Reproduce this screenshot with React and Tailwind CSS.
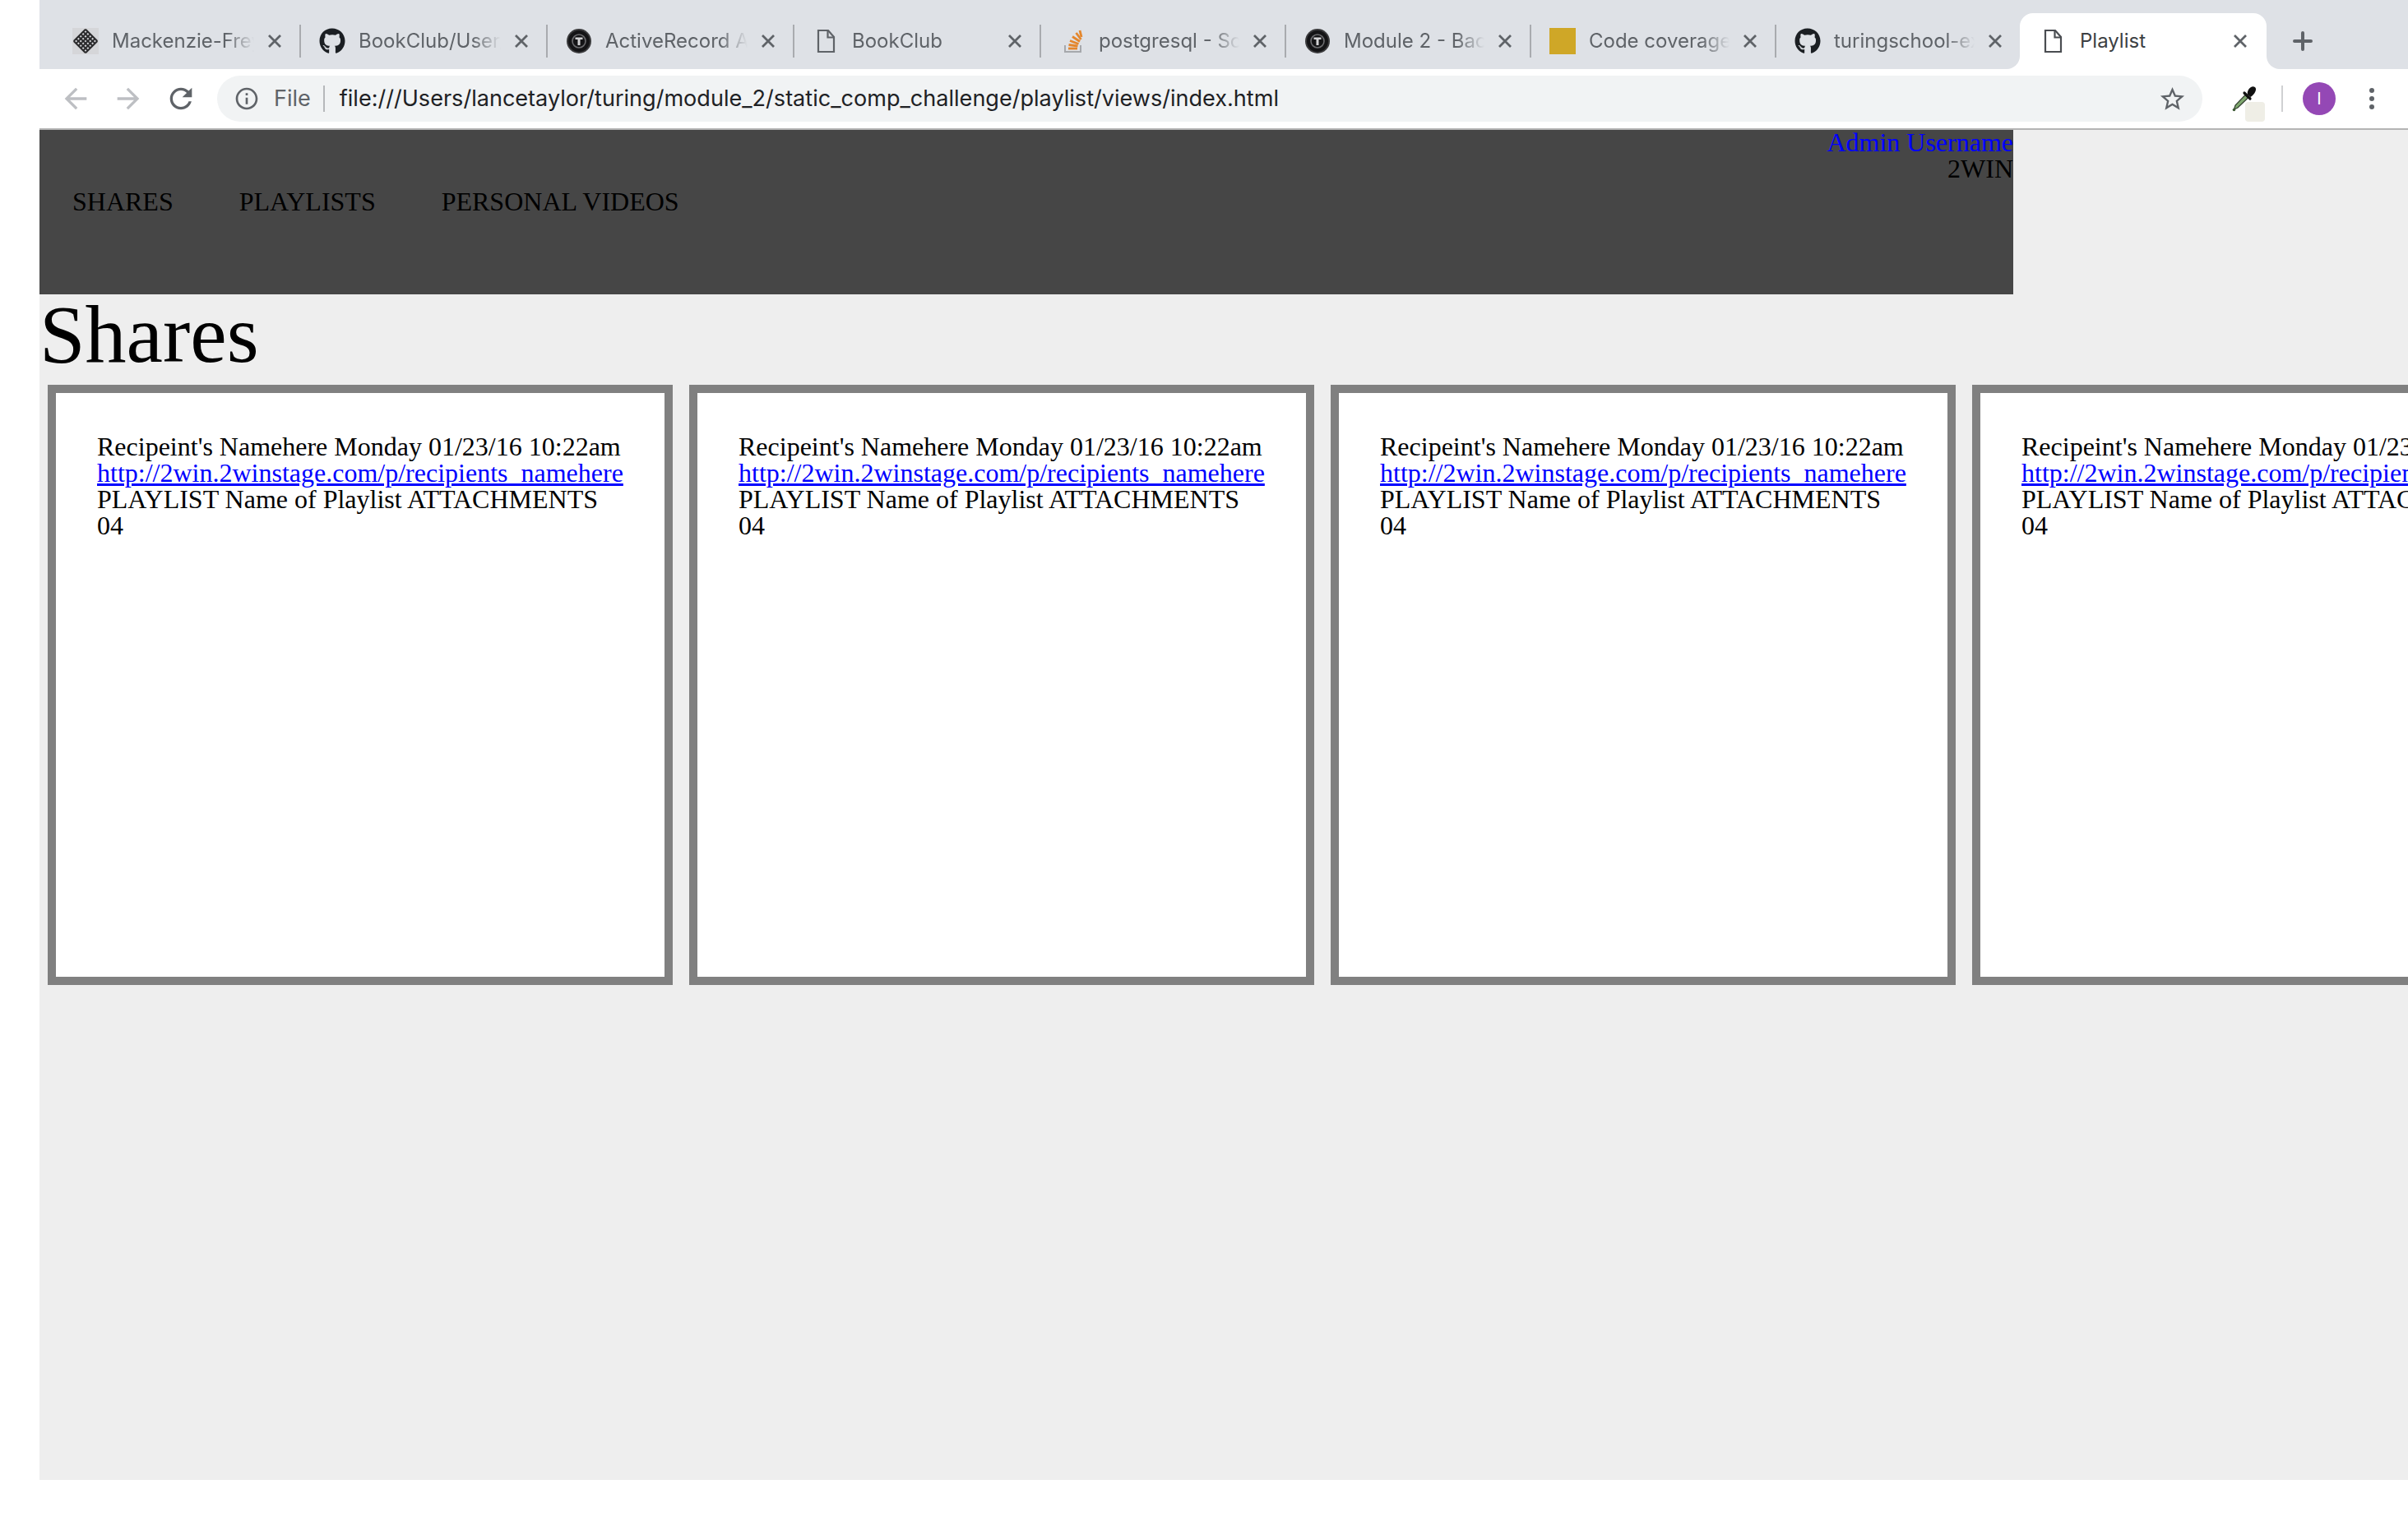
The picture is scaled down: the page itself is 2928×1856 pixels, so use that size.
import React from "react";
import { FaGithub } from "react-icons/fa";

const UI = "font-['Inter','Roboto',sans-serif]";

function DiamondIcon() {
  const lines = [];
  for (let i = 0; i <= 5; i++) {
    const p = 5 + i * 4.4;
    lines.push(<line key={"a" + i} x1={p} y1="5" x2={p} y2="27" />);
    lines.push(<line key={"b" + i} x1="5" y1={p} x2="27" y2={p} />);
  }
  return (
    <svg width="32" height="32" viewBox="0 0 32 32" className="bg-[#d5d6d9]">
      <g transform="rotate(45 16 16) translate(16 16) scale(0.92) translate(-16 -16)" stroke="#2b2b2d" strokeWidth="2.2" fill="none">
        {lines}
      </g>
    </svg>
  );
}

function TuringIcon() {
  return (
    <svg width="32" height="32" viewBox="0 0 32 32">
      <circle cx="16" cy="16" r="15" fill="#3a3a3c" />
      <circle cx="16" cy="16" r="13" fill="#141416" />
      <circle cx="16" cy="16" r="8" fill="none" stroke="#6d6d70" strokeWidth="1.6" />
      <path d="M11.5 11.5h9v2.6h-3v7h-3v-7h-3z" fill="#d2d2d4" />
    </svg>
  );
}

function DocIcon({ color = "#5f6368" }) {
  return (
    <svg width="32" height="32" viewBox="0 0 32 32" fill="none" stroke={color} strokeWidth="2.2">
      <path d="M7 3h12l7 8v18H7z" />
      <path d="M18.500 3v8.500h7.500" />
    </svg>
  );
}

function StackIcon() {
  return (
    <svg width="32" height="32" viewBox="0 0 32 32" fill="none">
      <path d="M7 21v8h19v-8" stroke="#a6a8ac" strokeWidth="2" />
      <g stroke="#e4862c" strokeWidth="2.800">
        <path d="M11 25h11" />
        <path d="M11.500 20.500l11 1.500" />
        <path d="M13 15.500l10.500 4" />
        <path d="M16 10.500l9 6" />
        <path d="M20.500 6l6 8" />
        <path d="M25 3l2 8" />
      </g>
    </svg>
  );
}

function Close() {
  return (
    <svg width="20" height="20" viewBox="0 0 20 20" stroke="#5f6368" strokeWidth="2.800" className="shrink-0">
      <path d="M3 3l14 14M17 3L3 17" />
    </svg>
  );
}

const tabs = [
  { title: "Mackenzie-Frey/brownfield", icon: <DiamondIcon />, wide: true },
  { title: "BookClub/User_stories", icon: <FaGithub className="w-8 h-8 text-[#1b1f23]" />, wide: true },
  { title: "ActiveRecord Associations", icon: <TuringIcon />, wide: true },
  { title: "BookClub", icon: <DocIcon />, wide: true },
  { title: "postgresql - Scaling", icon: <StackIcon /> },
  { title: "Module 2 - Backend", icon: <TuringIcon /> },
  { title: "Code coverage report", icon: <div className="w-8 h-8 bg-[#cfa727]" /> },
  { title: "turingschool-examples", icon: <FaGithub className="w-8 h-8 text-[#1b1f23]" />, noSep: true },
];

function Tab({ title, icon, noSep, wide }) {
  return (
    <div className={`${wide ? "w-[300px]" : "w-[298px]"} h-[68px] shrink-0 flex items-center pl-[22px]`}>
      <div className="w-8 h-8 shrink-0">{icon}</div>
      <div className="flex-1 min-w-0 ml-[16px] whitespace-nowrap overflow-hidden text-[24px] text-[#5f6368] [mask-image:linear-gradient(to_right,black_80%,transparent_100%)]">
        {title}
      </div>
      <div className="ml-[15px]"><Close /></div>
      <div className={`ml-[20px] w-[2px] h-[40px] shrink-0 ${noSep ? "bg-transparent" : "bg-[#a9abaf]"}`} />
    </div>
  );
}

function TabStrip() {
  return (
    <div className={`h-[84px] bg-[#dee1e6] flex items-end pl-[18px] ${UI}`}>
      {tabs.map((t) => (
        <Tab key={t.title} {...t} />
      ))}
      <div className="relative w-[300px] h-[68px] -ml-[2px] shrink-0 bg-white rounded-t-[16px] flex items-center pl-[24px]">
        <div className="absolute -left-4 bottom-0 w-4 h-4 bg-white">
          <div className="w-full h-full bg-[#dee1e6] rounded-br-[16px]" />
        </div>
        <div className="absolute -right-4 bottom-0 w-4 h-4 bg-white">
          <div className="w-full h-full bg-[#dee1e6] rounded-bl-[16px]" />
        </div>
        <div className="w-8 h-8 shrink-0"><DocIcon color="#4a4d51" /></div>
        <div className="w-[173px] ml-[17px] whitespace-nowrap overflow-hidden text-[24px] text-[#3c4043]">Playlist</div>
        <div className="ml-[12px]"><Close /></div>
      </div>
      <div className="h-[68px] flex items-center ml-[32px]">
        <svg width="24" height="24" viewBox="0 0 24 24" stroke="#5f6368" strokeWidth="4" strokeLinecap="round">
          <path d="M12 2v20M2 12h20" />
        </svg>
      </div>
    </div>
  );
}

function Toolbar() {
  return (
    <div className={`h-[72px] flex items-center pl-[24px] bg-white ${UI}`}>
      <svg width="40" height="40" viewBox="0 0 24 24" fill="#bdbfc3" className="shrink-0">
        <path d="M20 11H7.830l5.590-5.590L12 4l-8 8 8 8 1.410-1.410L7.830 13H20v-2z" />
      </svg>
      <svg width="40" height="40" viewBox="0 0 24 24" fill="#bdbfc3" className="shrink-0 ml-[24px]">
        <path d="M12 4l-1.410 1.410L16.170 11H4v2h12.170l-5.580 5.590L12 20l8-8z" />
      </svg>
      <svg width="40" height="40" viewBox="0 0 24 24" fill="#5f6368" className="shrink-0 ml-[24px]">
        <path d="M17.650 6.350C16.200 4.900 14.210 4 12 4c-4.420 0-7.990 3.580-7.990 8s3.570 8 7.990 8c3.730 0 6.840-2.550 7.730-6h-2.080c-.820 2.330-3.040 4-5.650 4-3.310 0-6-2.690-6-6s2.690-6 6-6c1.660 0 3.140.690 4.220 1.780L13 11h7V4l-2.350 2.350z" />
      </svg>
      <div className="w-[2414px] h-[56px] ml-[24px] shrink-0 rounded-full bg-[#f1f3f4] flex items-center pl-[20px]">
        <svg width="32" height="32" viewBox="0 0 24 24" fill="#5f6368" className="shrink-0">
          <path d="M11 17h2v-6h-2v6zm1-15C6.480 2 2 6.480 2 12s4.480 10 10 10 10-4.480 10-10S17.520 2 12 2zm0 18c-4.410 0-8-3.590-8-8s3.590-8 8-8 8 3.590 8 8-3.590 8-8 8zM11 9h2V7h-2v2z" />
        </svg>
        <span className="ml-[17px] text-[27px] text-[#5f6368]">File</span>
        <div className="ml-[15px] w-[2px] h-[32px] bg-[#b6b8bb] shrink-0" />
        <span className="ml-[18px] pt-px text-[27.07px] text-[#202124] whitespace-nowrap">
          file:///Users/lancetaylor/turing/module_2/static_comp_challenge/playlist/views/index.html
        </span>
        <svg width="35" height="35" viewBox="0 0 24 24" fill="#5f6368" className="shrink-0 ml-auto mr-[19px]">
          <path d="M22 9.240l-7.190-.620L12 2 9.190 8.630 2 9.240l5.460 4.730L5.820 21 12 17.270 18.180 21l-1.630-7.030L22 9.240zM12 15.400l-3.760 2.270 1-4.280-3.320-2.880 4.380-.380L12 6.100l1.710 4.040 4.380.380-3.320 2.880 1 4.280L12 15.400z" />
        </svg>
      </div>
      <div className="relative w-[40px] h-[44px] ml-[36px] mt-[12px] shrink-0">
        <svg width="30" height="32" viewBox="0 0 30 32" className="absolute left-0 top-0">
          <path d="M2.500 29L4 24 16 11.500l3.500 3.500L7 27z" fill="#7fa86f" stroke="#2f3b2c" strokeWidth="1.200" />
          <circle cx="2.500" cy="29.500" r="1.800" fill="#3c5a34" />
          <path d="M15 9l7 7" stroke="#111" strokeWidth="3.200" strokeLinecap="round" />
          <path d="M19 11l3.500 3c3-1.500 7-6.500 6.500-10-.3-2.500-3.500-3.500-6-2-2.500 1.500-5 5.500-4 9z" fill="#111" />
        </svg>
        <div className="absolute right-0 bottom-0 w-6 h-6 rounded bg-[#efeee6]" />
      </div>
      <div className="ml-[20px] w-[2px] h-[32px] bg-[#d0d1d3] shrink-0" />
      <div className="ml-[24px] w-10 h-10 rounded-full bg-[#9448b5] flex items-center justify-center text-white text-[20px] shrink-0">
        I
      </div>
      <div className="ml-[41px] flex flex-col gap-1 shrink-0">
        <div className="w-[6px] h-[6px] rounded-full bg-[#5f6368]" />
        <div className="w-[6px] h-[6px] rounded-full bg-[#5f6368]" />
        <div className="w-[6px] h-[6px] rounded-full bg-[#5f6368]" />
      </div>
    </div>
  );
}

function Card() {
  return (
    <div className="w-[760px] h-[730px] shrink-0 m-[10px] border-[10px] border-[#808080] bg-white px-[50px] pt-[49px] pb-[50px]">
      Recipeint's Namehere Monday 01/23/16 10:22am{" "}
      <a href="#" className="text-[#0000ff] underline">http://2win.2winstage.com/p/recipients_namehere</a>{" "}
      PLAYLIST Name of Playlist ATTACHMENTS 04
    </div>
  );
}

function Page() {
  return (
    <div className="h-[1642px] bg-[#eeeeee] overflow-hidden font-['Liberation_Serif',serif] text-[32px] leading-[32px] text-black">
      <header className="w-[2400px] h-[200px] bg-[#464646] flex justify-between">
        <nav className="flex gap-[80px] pl-[40px] pt-[71px]">
          <span>SHARES</span>
          <span>PLAYLISTS</span>
          <span>PERSONAL VIDEOS</span>
        </nav>
        <div className="text-right -mt-px">
          <a href="#" className="block text-[#0000ff]">Admin Username</a>
          <div>2WIN</div>
        </div>
      </header>
      <h1 className="h-[100px] text-[100px] leading-[98px] font-normal">Shares</h1>
      <div className="flex">
        <Card />
        <Card />
        <Card />
        <Card />
      </div>
    </div>
  );
}

export default function App() {
  return (
    <div className="w-[2928px] h-[1856px] overflow-hidden bg-white pl-[48px]">
      <TabStrip />
      <Toolbar />
      <div className="h-[2px] bg-[#b4b4b4]" />
      <Page />
    </div>
  );
}
